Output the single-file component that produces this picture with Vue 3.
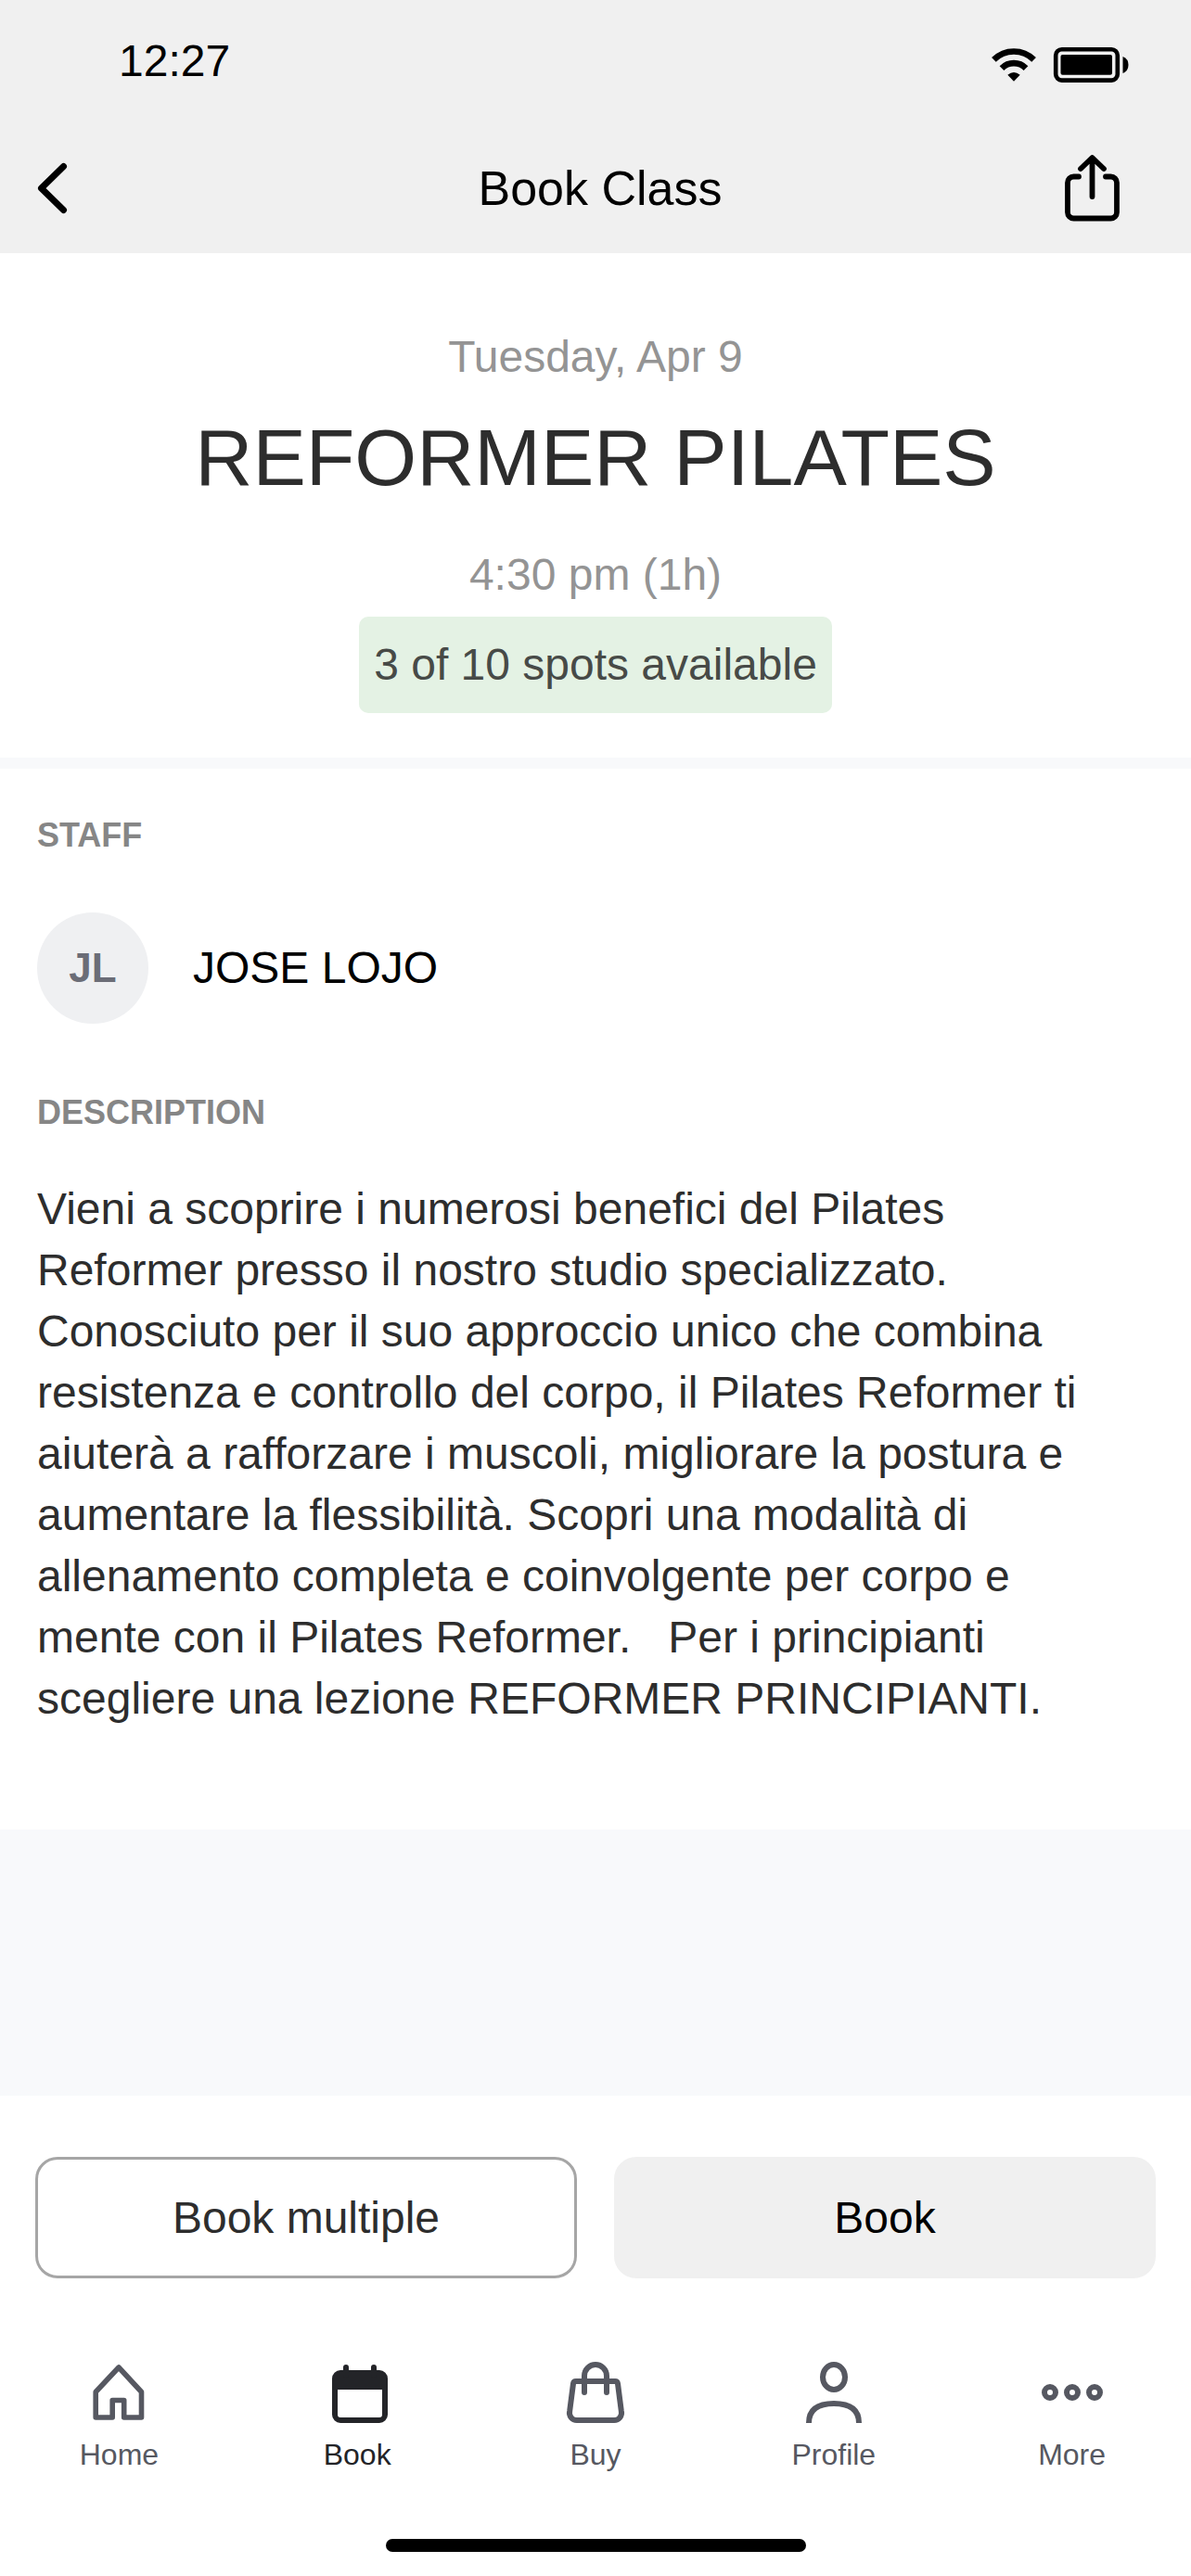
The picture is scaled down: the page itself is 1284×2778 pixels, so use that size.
<script setup>
const description =
  'Vieni a scoprire i numerosi benefici del Pilates Reformer presso il nostro studio specializzato. ' +
  'Conosciuto per il suo approccio unico che combina resistenza e controllo del corpo, il Pilates Reformer ti ' +
  'aiuterà a rafforzare i muscoli, migliorare la postura e aumentare la flessibilità. ' +
  'Scopri una modalità di allenamento completa e coinvolgente per corpo e mente con il Pilates Reformer.' +
  '\u00a0\u00a0 Per i principianti scegliere una lezione REFORMER PRINCIPIANTI.'

const tabs = [
  { id: 'home', label: 'Home' },
  { id: 'book', label: 'Book', active: true },
  { id: 'buy', label: 'Buy' },
  { id: 'profile', label: 'Profile' },
  { id: 'more', label: 'More' },
]
</script>

<template>
  <div class="screen">
    <header class="top">
      <div class="status">
        <span>12:27</span>
        <svg class="status-icons" viewBox="0 0 150 56" aria-hidden="true">
          <g fill="none" stroke="#000">
            <path d="M4.4 21.4a30.5 30.5 0 0 1 43.2 0" stroke-width="6.6" />
            <path d="M13 30.6a18.2 18.2 0 0 1 26 0" stroke-width="6.6" />
            <rect x="71.2" y="10.2" width="66.6" height="33.4" rx="6.5" stroke-width="4.6" />
          </g>
          <path d="M19.3 37.8q6.7-5.4 13.4 0L26 44.7z" />
          <rect x="76.5" y="16" width="55.5" height="21.8" rx="2" />
          <path d="M143.5 18q6 2.5 6 9t-6 9z" />
        </svg>
      </div>
      <nav class="nav">
        <button class="icon-button" type="button" aria-label="Back">
          <svg class="back" viewBox="0 0 34 60" fill="none" stroke="#000" stroke-width="7" stroke-linecap="round" stroke-linejoin="round">
            <path d="M28.5 6.5 4.5 30l24 23.5" />
          </svg>
        </button>
        <h1>Book Class</h1>
        <button class="icon-button share-button" type="button" aria-label="Share">
          <svg class="share" viewBox="0 0 60 74" fill="none" stroke="#000" stroke-width="5.8" stroke-linecap="round" stroke-linejoin="round">
            <path d="M15 24.5H9.5A6.5 6.5 0 0 0 3 31v32a6.5 6.5 0 0 0 6.5 6.5h40A6.5 6.5 0 0 0 56 63V31a6.5 6.5 0 0 0-6.5-6.5H44" />
            <path d="M29.5 46V4.5M17 16 29.5 4 42 16" />
          </svg>
        </button>
      </nav>
    </header>

    <main class="content">
      <section class="summary">
        <p class="muted">Tuesday, Apr 9</p>
        <h2>REFORMER PILATES</h2>
        <p class="muted">4:30 pm (1h)</p>
        <p class="spots">3 of 10 spots available</p>
      </section>

      <section class="details">
        <h3>STAFF</h3>
        <div class="staff">
          <span class="avatar">JL</span>
          <span>JOSE LOJO</span>
        </div>
        <h3>DESCRIPTION</h3>
        <p class="description">{{ description }}</p>
      </section>
    </main>

    <footer class="bottom">
      <div class="actions">
        <button class="action outlined" type="button">Book multiple</button>
        <button class="action filled" type="button">Book</button>
      </div>
      <nav class="tabs">
        <a v-for="tab in tabs" :key="tab.id" href="#" class="tab" :class="{ active: tab.active }">
          <svg class="tab-icon" viewBox="0 0 72 72" fill="none" stroke="currentColor" stroke-width="6" aria-hidden="true">
            <path v-if="tab.id === 'home'" stroke-width="5.6" stroke-linejoin="round" d="M36 9 11.2 35.5V63h18V44.500h12.500V63h18.800V35.500z" />
            <g v-else-if="tab.id === 'book'">
              <rect x="12" y="15" width="54" height="51" rx="6" />
              <path d="M12 15h54v18H12z" fill="currentColor" stroke="none" />
              <path d="M24 9v8M54 9v8" stroke-linecap="round" />
            </g>
            <g v-else-if="tab.id === 'buy'" stroke-linecap="round">
              <path d="M15 24h42a3 3 0 0 1 3 2.5L63.8 56a8 8 0 0 1-8 10H16.2a8 8 0 0 1-8-10L12 26.5A3 3 0 0 1 15 24z" />
              <path d="M24 36V18a12 12 0 0 1 24 0v18" />
            </g>
            <g v-else-if="tab.id === 'profile'">
              <ellipse cx="36" cy="19.5" rx="12" ry="13.5" />
              <path d="M9 69C9 54 19 48 36 48s27 6 27 21" />
            </g>
            <g v-else>
              <circle cx="12" cy="36" r="6" />
              <circle cx="36" cy="36" r="6" />
              <circle cx="60" cy="36" r="6" />
            </g>
          </svg>
          <span>{{ tab.label }}</span>
        </a>
      </nav>
      <div class="indicator"></div>
    </footer>
  </div>
</template>

<style>
body {
  margin: 0;
}
</style>

<style scoped>
.screen {
  display: flex;
  flex-direction: column;
  min-height: 100vh;
  background: #f8f9fb;
  color: #000;
  font-family: "Liberation Sans", Arial, sans-serif;
  font-size: 48px;
  line-height: 66px;
}
h1,
h2,
h3,
p {
  margin: 0;
  font-weight: 400;
}
button {
  font: inherit;
  cursor: pointer;
}
svg {
  display: block;
}
.top {
  background: #f0f0f0;
}
.status {
  display: flex;
  justify-content: space-between;
  align-items: flex-end;
  padding: 33px 67px 34px 128px;
}
.status-icons {
  width: 150px;
  height: 56px;
}
.nav {
  display: grid;
  grid-template-columns: 1fr auto 1fr;
  align-items: center;
  height: 140px;
  padding: 0 76px 0 40px;
}
.nav h1 {
  padding-left: 46px;
  font-size: 52px;
}
.icon-button {
  justify-self: start;
  padding: 0;
  border: 0;
  background: none;
}
.share-button {
  justify-self: end;
}
.back {
  width: 34px;
  height: 60px;
}
.share {
  width: 60px;
  height: 74px;
}
.content {
  background: #fff;
}
.summary {
  display: flex;
  flex-direction: column;
  align-items: center;
  padding: 79px 40px 48px;
  border-bottom: 12px solid #f8f9fb;
}
.summary h2 {
  margin: 21px 0 40px;
  color: #2d2d2d;
  font-size: 86px;
  line-height: 108px;
}
.muted {
  color: #949494;
}
.spots {
  margin-top: 12px;
  padding: 19px 16px;
  border-radius: 10px;
  background: #e4f2e4;
  color: #474a47;
}
.details {
  padding: 51px 84px 108px 40px;
}
.details h3 {
  color: #868686;
  font-size: 36px;
  font-weight: 700;
  line-height: 42px;
}
.staff {
  display: flex;
  align-items: center;
  gap: 48px;
  margin: 62px 0 75px;
}
.avatar {
  display: flex;
  align-items: center;
  justify-content: center;
  width: 120px;
  height: 120px;
  border-radius: 50%;
  background: #eff0f2;
  color: #6b6d77;
  font-size: 44px;
  font-weight: 700;
}
.description {
  margin-top: 50px;
  color: #2d2d2d;
}
.bottom {
  margin-top: auto;
  padding-bottom: 26px;
  background: #fff;
}
.actions {
  display: flex;
  gap: 40px;
  padding: 66px 38px 87px;
}
.action {
  flex: 1;
  height: 131px;
  border: 3px solid #a6a6a6;
  border-radius: 24px;
  background: #fff;
  color: #2d2d2d;
}
.action.filled {
  border-color: #f0f0f0;
  background: #f0f0f0;
  color: #000;
}
.tabs {
  display: flex;
}
.tab {
  display: flex;
  flex: 1;
  flex-direction: column;
  align-items: center;
  gap: 10px;
  color: #565861;
  font-size: 32px;
  line-height: 42px;
  text-decoration: none;
}
.tab.active {
  color: #232428;
}
.tab-icon {
  width: 72px;
  height: 72px;
}
.indicator {
  width: 453px;
  height: 14px;
  margin: 70px auto 0;
  border-radius: 7px;
  background: #000;
}
</style>
